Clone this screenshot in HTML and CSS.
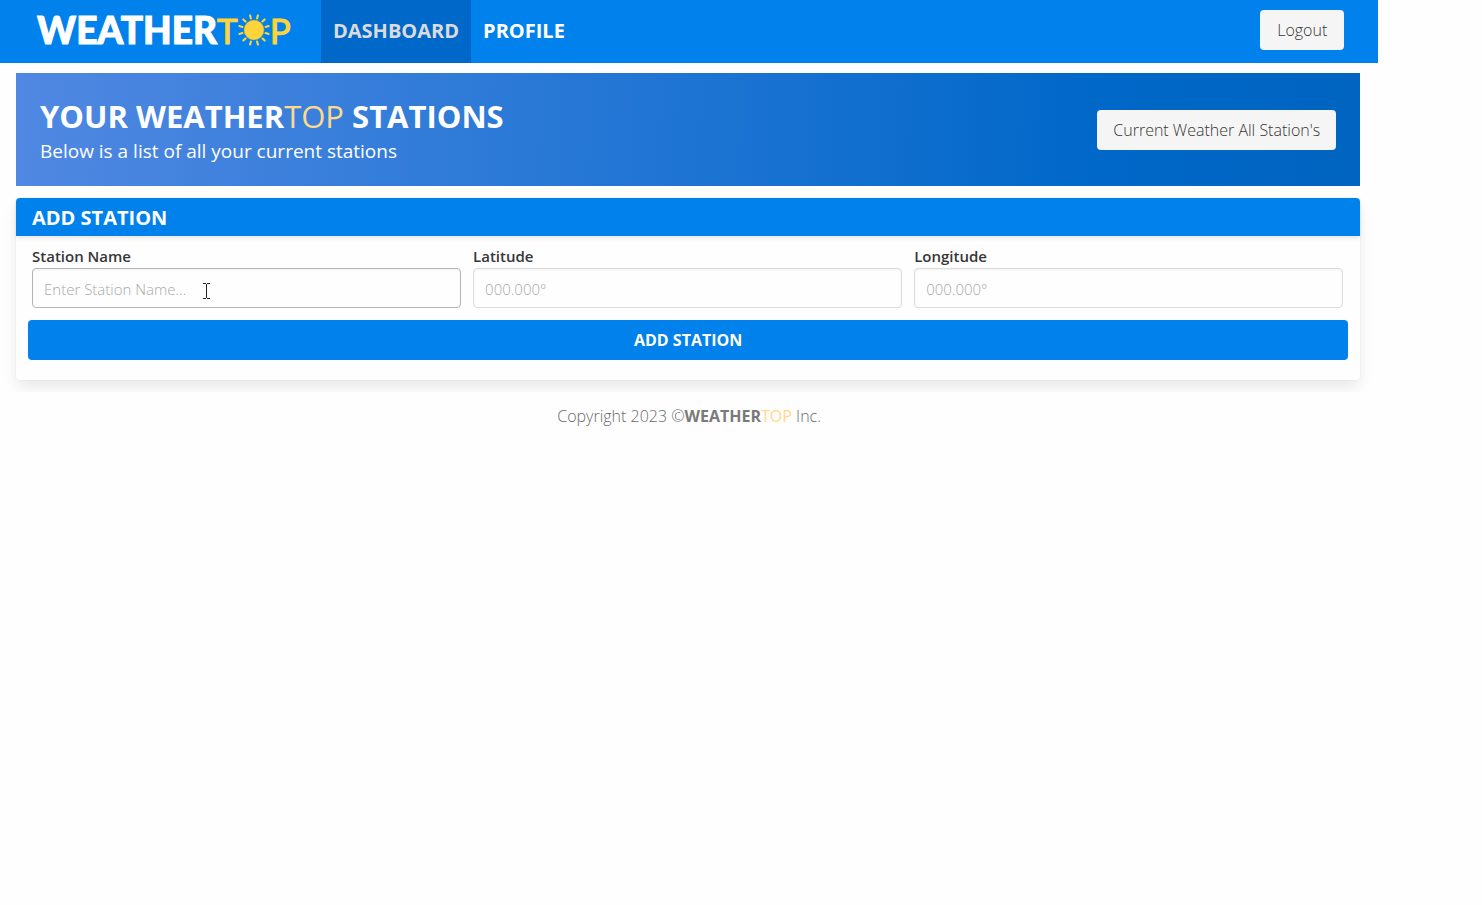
FILE: index.html
```html
<!DOCTYPE html>
<html lang="en">
<head>
<meta charset="utf-8">
<meta name="viewport" content="width=device-width, initial-scale=1">
<title>WeatherTop Dashboard</title>
<link rel="stylesheet" href="styles.css">
</head>
<body>
<div class="page">
  <nav class="navbar">
    <a class="logo" href="#" aria-label="WeatherTop home">
      <span class="logo-strong">WEATHER</span><span class="logo-top">T</span>
      <svg class="sun" viewBox="0 0 32 32" aria-hidden="true">
        <circle cx="16" cy="16" r="9.8" fill="#ffd43b" stroke="#e0b94c" stroke-width=".7"/>
        <g stroke="#ffd43b" stroke-width="2.1" stroke-linecap="round">
          <path d="M19.1 4.400l.8-3M12.900 4.400l-.8-3M19.100 27.600l.8 3M12.900 27.600l-.8 3"/>
          <path d="M24.500 7.500l2.100-2.100M7.500 7.500L5.400 5.400M24.500 24.500l2.100 2.100M7.500 24.500l-2.100 2.100"/>
          <path d="M27.600 12.900l3-.8M4.400 12.900l-3-.8M27.600 19.100l3 .8M4.400 19.100l-3 .8"/>
        </g>
      </svg>
      <span class="logo-top">P</span>
    </a>
    <a class="nav-link active" href="#">DASHBOARD</a>
    <a class="nav-link" href="#">PROFILE</a>
    <button class="button logout" type="button">Logout</button>
  </nav>
  <main class="content">
    <section class="hero">
      <div>
        <h1 class="title">YOUR WEATHER<span class="top">TOP</span> STATIONS</h1>
        <p class="subtitle">Below is a list of all your current stations</p>
      </div>
      <button class="button" type="button">Current Weather All Station's</button>
    </section>
    <section class="card">
      <h2 class="card-header">ADD STATION</h2>
      <form class="form">
        <div class="fields">
          <div class="field">
            <label for="name">Station Name</label>
            <input class="hovered" id="name" type="text" placeholder="Enter Station Name...">
            <svg class="cursor" viewBox="0 0 7 16" aria-hidden="true"><path d="M0 .5h3M4 .5h3M3.500 1v14M0 15.500h3M4 15.500h3" stroke="#222" fill="none"/></svg>
          </div>
          <div class="field">
            <label for="lat">Latitude</label>
            <input id="lat" type="text" placeholder="000.000°">
          </div>
          <div class="field">
            <label for="lng">Longitude</label>
            <input id="lng" type="text" placeholder="000.000°">
          </div>
        </div>
        <button class="submit" type="button">ADD STATION</button>
      </form>
    </section>
  </main>
  <footer class="footer">Copyright 2023 ©<strong>WEATHER</strong><span class="top">TOP</span> Inc.</footer>
</div>
</body>
</html>
```
FILE: styles.css
```css
* { box-sizing: border-box; }
body {
  margin: 0;
  background: #fefefe;
  color: #4a4a4a;
  font-family: "Open Sans", "Noto Sans", sans-serif;
  font-size: 16px;
  font-weight: 300;
  line-height: 24px;
}
button, input { font: inherit; }
.page { width: 93%; }
.navbar {
  display: flex;
  align-items: stretch;
  min-height: 63px;
  padding-right: 34px;
  background: #0081eb;
}
.logo {
  display: flex;
  align-items: center;
  width: 321px;
  padding: 0 0 3px 37px;
  color: #fff;
  font-family: Lato, sans-serif;
  font-size: 35px;
  line-height: 60px;
  text-decoration: none;
}
.logo-strong { font-size: 37px; font-weight: 900; -webkit-text-stroke: 1px #fff; }
.logo-top { color: #ffd43b; font-weight: 400; -webkit-text-stroke: 1px #ffd43b; }
.sun { width: 32px; height: 32px; }
.nav-link {
  display: flex;
  align-items: center;
  padding: 0 12px 2px;
  color: #fff;
  font-size: 20px;
  font-weight: 700;
  text-decoration: none;
}
.nav-link.active { background: #0068c9; color: #dbdbdb; }
.button {
  height: 40px;
  padding: 0 16px;
  border: 0;
  border-radius: 4px;
  background: #f5f5f5;
  color: #363636;
}
.logout { margin: 10px 0 0 auto; padding: 0 17px; }
.content { padding: 10px 18px 12px 16px; }
.hero {
  display: flex;
  align-items: center;
  justify-content: space-between;
  min-height: 113px;
  padding: 0 24px;
  background: linear-gradient(92deg, #5088e2 0%, #2878d6 40%, #0068c9 80%, #0064c0 100%);
  color: #fff;
}
.title { margin: 0; padding-top: 2px; font-size: 31px; font-weight: 700; line-height: 40px; }
.title .top { font-weight: 400; }
.top { color: #ffd98c; }
.subtitle { margin: 0; font-size: 19px; font-weight: 400; line-height: 30px; }
.card {
  margin-top: 12px;
  border-radius: 4px;
  box-shadow: 0 8px 16px -2px rgba(10, 10, 10, .1), 0 0 0 1px rgba(10, 10, 10, .02);
}
.card-header {
  margin: 0;
  padding: 5px 16px 3px;
  border-radius: 4px 4px 0 0;
  background: #0081eb;
  box-shadow: 0 2px 4px rgba(10, 10, 10, .1);
  color: #fff;
  font-size: 20px;
  font-weight: 700;
  line-height: 30px;
}
.form { padding: 8px 12px 20px; }
.fields {
  display: grid;
  grid-template-columns: repeat(3, 1fr);
  gap: 12px;
  padding: 0 5px 0 4px;
}
.field { position: relative; }
.field label { display: block; color: #363636; font-size: 15px; font-weight: 600; }
.field input {
  display: block;
  width: 100%;
  height: 40px;
  padding: 2px 11px 0;
  border: 1px solid #dbdbdb;
  border-radius: 4px;
  background: #fefefe;
  box-shadow: inset 0 1px 2px rgba(10, 10, 10, .05);
  color: #363636;
  font-size: 15px;
}
.field input.hovered { border-color: #b5b5b5; }
.field input::placeholder { color: #a8a8a8; opacity: 1; }
.cursor { position: absolute; top: 39px; left: 171px; width: 7px; height: 16px; }
.submit {
  display: block;
  width: 100%;
  height: 40px;
  margin-top: 12px;
  border: 0;
  border-radius: 4px;
  background: #0081eb;
  color: #fff;
  font-weight: 700;
}
.footer {
  position: relative;
  padding: 12px 12px 24px;
  background: #fefefe;
  color: #6a6a6a;
  text-align: center;
}
.footer strong { color: #7a7a7a; font-weight: 700; }
.footer .top { font-weight: 400; }
```
